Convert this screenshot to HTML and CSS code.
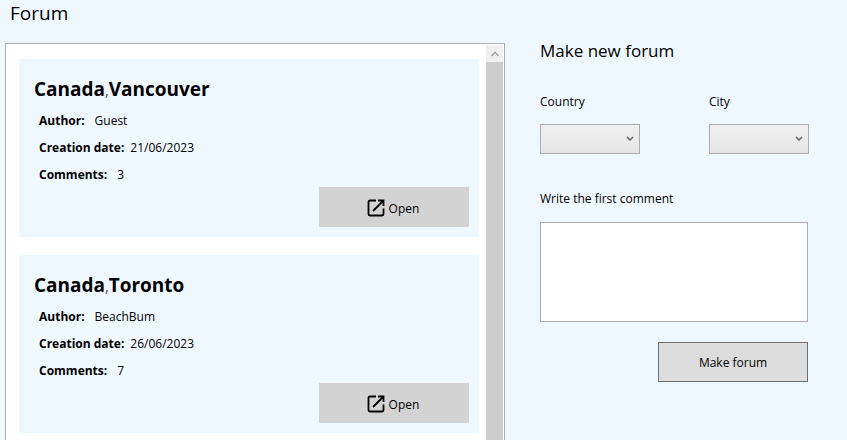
FILE: index.html
```html
<!DOCTYPE html>
<html lang="en">
<head>
<meta charset="utf-8">
<title>Forum</title>
<link rel="stylesheet" href="styles.css">
</head>
<body>
<svg class="sprite" aria-hidden="true">
  <symbol id="open-icon" viewBox="0 0 18 18">
    <path d="M9 1.500H3Q1.500 1.500 1.500 3V15Q1.500 16.500 3 16.500H15Q16.500 16.500 16.500 15V9.500M11 1.500H16.500V7M16 2L6 12" fill="none" stroke="currentColor" stroke-width="1.800"/>
  </symbol>
</svg>
<div class="page">
  <main class="forums">
    <h1 class="heading">Forum</h1>
    <div class="list-box">
      <div class="list">
        <article class="card">
          <h2 class="place">Canada<span class="comma">,</span>Vancouver</h2>
          <dl class="facts">
            <div class="fact wide"><dt>Author:</dt><dd>Guest</dd></div>
            <div class="fact"><dt>Creation date:</dt><dd>21/06/2023</dd></div>
            <div class="fact wide"><dt>Comments:</dt><dd>3</dd></div>
          </dl>
          <button class="open" type="button"><svg class="icon" aria-hidden="true"><use href="#open-icon"/></svg>Open</button>
        </article>
        <article class="card">
          <h2 class="place">Canada<span class="comma">,</span>Toronto</h2>
          <dl class="facts">
            <div class="fact wide"><dt>Author:</dt><dd>BeachBum</dd></div>
            <div class="fact"><dt>Creation date:</dt><dd>26/06/2023</dd></div>
            <div class="fact wide"><dt>Comments:</dt><dd>7</dd></div>
          </dl>
          <button class="open" type="button"><svg class="icon" aria-hidden="true"><use href="#open-icon"/></svg>Open</button>
        </article>
      </div>
      <div class="scrollbar">
        <button class="scroll-up" type="button" aria-label="Scroll up"><svg class="chevron" viewBox="0 0 8 6" aria-hidden="true"><path d="M0.500 5L4 1.300L7.500 5" fill="none" stroke="#a0a0a0" stroke-width="1.400"/></svg></button>
      </div>
    </div>
  </main>
  <form class="new-forum">
    <h2 class="heading">Make new forum</h2>
    <div class="choices">
      <div class="field">
        <label for="country">Country</label>
        <div class="picker">
          <select id="country"></select>
          <svg class="arrow" viewBox="0 0 8 6" aria-hidden="true"><path d="M1 1L4 4L7 1" fill="none" stroke="#606060" stroke-width="1.500"/></svg>
        </div>
      </div>
      <div class="field">
        <label for="city">City</label>
        <div class="picker">
          <select id="city"></select>
          <svg class="arrow" viewBox="0 0 8 6" aria-hidden="true"><path d="M1 1L4 4L7 1" fill="none" stroke="#606060" stroke-width="1.500"/></svg>
        </div>
      </div>
    </div>
    <div class="field comment">
      <label for="comment">Write the first comment</label>
      <textarea id="comment"></textarea>
    </div>
    <button class="submit" type="button">Make forum</button>
  </form>
</div>
</body>
</html>
```
FILE: styles.css
```css
* {
  box-sizing: border-box;
}

body {
  margin: 0;
  background: #f0f8ff;
  color: #000;
  font: 12px/17px "Open Sans", "Noto Sans", sans-serif;
}

button,
select,
textarea {
  font: inherit;
  color: inherit;
  border-radius: 0;
}

.sprite {
  display: none;
}

.page {
  display: flex;
  gap: 35px;
  height: 100vh;
  overflow: hidden;
}

.forums {
  flex: 1;
  display: flex;
  flex-direction: column;
  padding-left: 5px;
}

.heading {
  margin: 0;
  font-size: 17px;
  font-weight: 400;
  line-height: 26px;
}

.forums .heading {
  padding: 0 5px;
  margin-bottom: 17px;
  font-size: 19px;
}

.list-box {
  flex: 1;
  min-height: 0;
  display: flex;
  background: #fff;
  border: 1px solid #abadb3;
  border-bottom: 0;
  padding: 1px 1px 0 0;
}

.list {
  flex: 1;
  display: flex;
  flex-direction: column;
  gap: 18px;
  padding: 14px 7px 0 13px;
  overflow: hidden;
}

.card {
  flex: none;
  display: flex;
  flex-direction: column;
  padding: 17px 10px 10px 15px;
  background: #f0f8ff;
}

.place {
  margin: 0;
  font-size: 19px;
  line-height: 27px;
}

.comma {
  font-size: 17px;
  font-weight: 300;
}

.facts {
  display: flex;
  flex-direction: column;
  gap: 10px;
  margin: 9px 0 4px 5px;
}

.fact {
  display: flex;
  gap: 6px;
}

.fact.wide {
  gap: 10px;
}

dt {
  font-weight: 700;
}

dd {
  margin: 0;
}

.open {
  align-self: flex-end;
  display: flex;
  align-items: center;
  justify-content: center;
  gap: 4px;
  width: 150px;
  height: 40px;
  padding: 2px 2px 0 0;
  border: 0;
  background: #d3d3d3;
}

.icon {
  width: 18px;
  height: 18px;
}

.scrollbar {
  width: 17px;
  background: #cdcdcd;
}

.scroll-up {
  display: flex;
  align-items: center;
  justify-content: center;
  width: 17px;
  height: 17px;
  padding: 0;
  border: 0;
  background: #f0f0f0;
}

.chevron,
.arrow {
  width: 8px;
  height: 6px;
}

.new-forum {
  width: 307px;
  padding: 38px 38px 0 0;
}

.choices {
  display: flex;
  justify-content: space-between;
  margin: 29px 0 36px;
}

.field {
  display: flex;
  flex-direction: column;
  gap: 14px;
}

.comment {
  gap: 15px;
}

.picker {
  position: relative;
  display: flex;
}

select {
  appearance: none;
  width: 100px;
  height: 30px;
  border: 1px solid #acacac;
  background: linear-gradient(#f0f0f0, #e5e5e5);
}

.arrow {
  position: absolute;
  right: 6px;
  top: 12px;
  pointer-events: none;
}

.comment,
.submit {
  margin-right: 1px;
}

textarea {
  width: 100%;
  height: 100px;
  border: 1px solid #abadb3;
  background: #fff;
  resize: none;
}

.submit {
  display: block;
  width: 150px;
  height: 40px;
  margin-top: 20px;
  margin-left: auto;
  border: 1px solid #707070;
  background: #ddd;
}
```
